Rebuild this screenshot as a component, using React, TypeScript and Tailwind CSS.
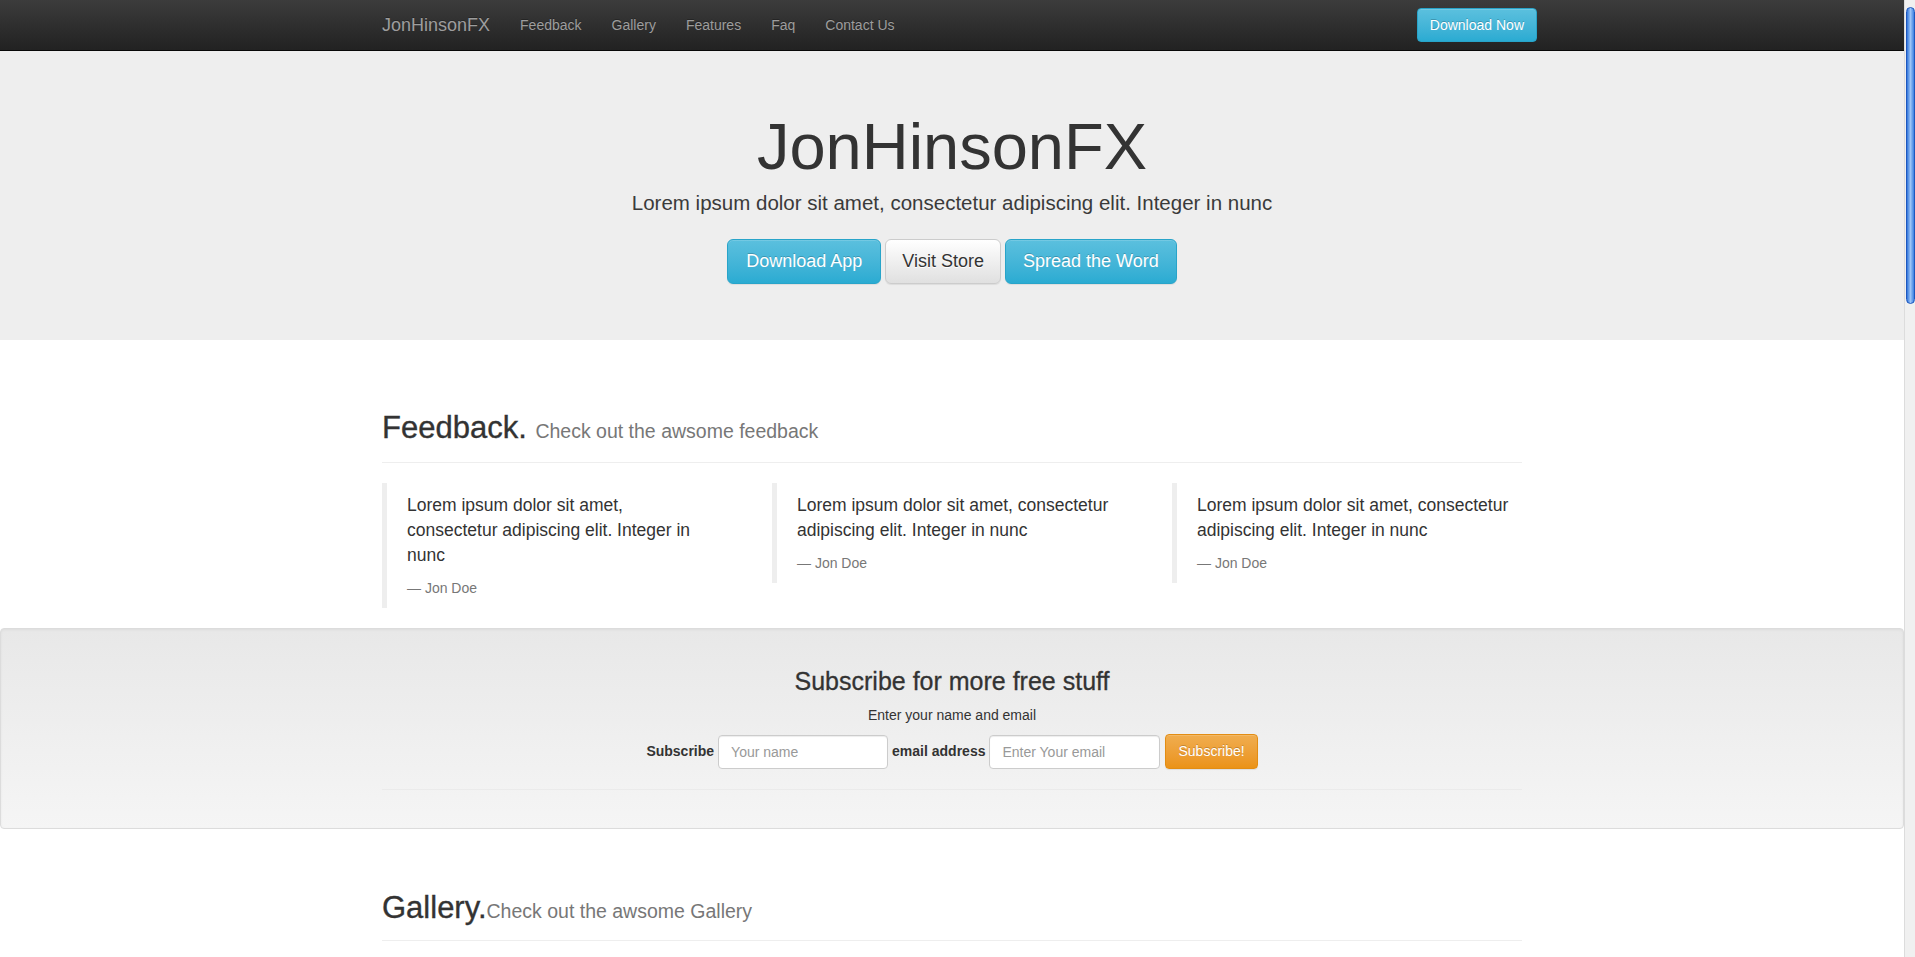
import React from 'react';

const quotes = [
  ['Lorem ipsum dolor sit amet,', 'consectetur adipiscing elit. Integer in', 'nunc'],
  ['Lorem ipsum dolor sit amet, consectetur', 'adipiscing elit. Integer in nunc'],
  ['Lorem ipsum dolor sit amet, consectetur', 'adipiscing elit. Integer in nunc'],
];

function NavBar() {
  return (
    <div className="h-[51px] border-b border-[#080808] bg-gradient-to-b from-[#3c3c3c] to-[#222222]">
      <div className="mx-auto flex h-[50px] w-[1170px] items-center">
        <a className="px-[15px] text-[18px] leading-[20px] text-[#9d9d9d] [text-shadow:0_-1px_0_rgba(0,0,0,0.25)]">JonHinsonFX</a>
        {['Feedback', 'Gallery', 'Features', 'Faq', 'Contact Us'].map((l) => (
          <a key={l} className="px-[15px] text-[14px] leading-[20px] text-[#9d9d9d] [text-shadow:0_-1px_0_rgba(0,0,0,0.25)]">
            {l}
          </a>
        ))}
        <div className="ml-auto">
          <button className="h-[34px] rounded-[4px] border border-[#28a4c9] bg-gradient-to-b from-[#5bc0de] to-[#2aabd2] px-[12px] text-[14px] leading-[20px] text-white shadow-[inset_0_1px_0_rgba(255,255,255,0.15)] [text-shadow:0_-1px_0_rgba(0,0,0,0.2)]">
            Download Now
          </button>
        </div>
      </div>
    </div>
  );
}

function Hero() {
  return (
    <div className="bg-[#eeeeee] pt-[60px] pb-[56px] text-center text-[#333]">
      <h1 className="text-[65px] leading-[71px]">JonHinsonFX</h1>
      <p className="mt-[6px] text-[20.5px] font-light leading-[30px] text-[#3a3a3a]">
        Lorem ipsum dolor sit amet, consectetur adipiscing elit. Integer in nunc
      </p>
      <div className="mt-[21px] flex justify-center gap-[4px]">
        <button className="h-[45px] rounded-[6px] border border-[#28a4c9] bg-gradient-to-b from-[#5bc0de] to-[#2aabd2] px-[18px] text-[18px] text-white shadow-[inset_0_1px_0_rgba(255,255,255,0.15),0_1px_1px_rgba(0,0,0,0.075)] [text-shadow:0_-1px_0_rgba(0,0,0,0.2)]">
          Download App
        </button>
        <button className="h-[45px] rounded-[6px] border border-[#cccccc] bg-gradient-to-b from-white to-[#e0e0e0] px-[16px] text-[18px] text-[#333] shadow-[inset_0_1px_0_rgba(255,255,255,0.15),0_1px_1px_rgba(0,0,0,0.075)] [text-shadow:0_1px_0_#fff]">
          Visit Store
        </button>
        <button className="h-[45px] rounded-[6px] border border-[#28a4c9] bg-gradient-to-b from-[#5bc0de] to-[#2aabd2] px-[17px] text-[18px] text-white shadow-[inset_0_1px_0_rgba(255,255,255,0.15),0_1px_1px_rgba(0,0,0,0.075)] [text-shadow:0_-1px_0_rgba(0,0,0,0.2)]">
          Spread the Word
        </button>
      </div>
    </div>
  );
}

function SectionHeader({ title, sub, gap, pad }: { title: string; sub: string; gap: boolean; pad: string }) {
  return (
    <div className={`border-b border-[#eeeeee] ${pad}`}>
      <h2 className="mb-[10px] text-[31px] font-medium leading-[33px] text-[#333] [-webkit-text-stroke:0.35px_#333]">
        {title}
        {gap ? ' ' : ''}
        <small className="text-[19.5px] font-normal text-[#777] [-webkit-text-stroke:0]">{sub}</small>
      </h2>
    </div>
  );
}

function Feedback() {
  return (
    <div className="mx-auto w-[1140px] pt-[71px]">
      <SectionHeader title="Feedback." sub="Check out the awsome feedback" gap pad="pb-[4px]" />
      <div className="mt-[20px] grid grid-cols-[390px_400px_1fr] items-start">
        {quotes.map((lines, i) => (
          <blockquote key={i} className="mb-[20px] border-l-[5px] border-[#eeeeee] px-[20px] py-[10px]">
            <p className="mb-[10px] text-[17.5px] leading-[25px] text-[#333]">
              {lines.map((ln, j) => (
                <span key={j} className="block whitespace-nowrap">{ln}</span>
              ))}
            </p>
            <footer className="text-[14px] leading-[20px] text-[#777]">{'\u2014\u00a0'}Jon Doe</footer>
          </blockquote>
        ))}
      </div>
    </div>
  );
}

function Subscribe() {
  return (
    <div className="h-[201px] rounded-[4px] border border-[#dcdcdc] bg-gradient-to-b from-[#e8e8e8] to-[#f5f5f5] shadow-[inset_0_1px_3px_rgba(0,0,0,0.05)]">
      <div className="mx-auto w-[1140px] border-b border-black/[0.03] pt-[39px] pb-[20px] text-center text-[#333]">
        <h3 className="text-[25px] font-medium leading-[26px] [-webkit-text-stroke:0.3px_#333]">Subscribe for more free stuff</h3>
        <p className="mt-[11px] text-[14px] leading-[20px]">Enter your name and email</p>
        <div className="mt-[9px] flex items-center justify-center text-[14px]">
          <label className="mr-[4px] font-bold">Subscribe</label>
          <input
            className="h-[34px] w-[170px] rounded-[4px] border border-[#cccccc] bg-white px-[12px] text-[14px] shadow-[inset_0_1px_1px_rgba(0,0,0,0.075)] outline-none placeholder:text-[#999]"
            placeholder="Your name"
          />
          <label className="mr-[4px] ml-[4px] font-bold">email address</label>
          <input
            className="h-[34px] w-[171px] rounded-[4px] border border-[#cccccc] bg-white px-[12px] text-[14px] shadow-[inset_0_1px_1px_rgba(0,0,0,0.075)] outline-none placeholder:text-[#999]"
            placeholder="Enter Your email"
          />
          <button className="ml-[5px] h-[35px] rounded-[4px] border border-[#e38d13] bg-gradient-to-b from-[#f0ad4e] to-[#eb9316] px-[12px] text-[14px] text-white shadow-[inset_0_1px_0_rgba(255,255,255,0.15),0_1px_1px_rgba(0,0,0,0.075)] [text-shadow:0_-1px_0_rgba(0,0,0,0.2)]">
            Subscribe!
          </button>
        </div>
      </div>
    </div>
  );
}

function Gallery() {
  return (
    <div className="mx-auto w-[1140px] pt-[62px]">
      <SectionHeader title="Gallery." sub="Check out the awsome Gallery" gap={false} pad="pb-[2px]" />
    </div>
  );
}

export default function App() {
  return (
    <div className="flex h-[957px] overflow-hidden bg-white font-['Liberation_Sans',Arial,sans-serif]">
      <div className="min-w-0 flex-1">
        <NavBar />
        <Hero />
        <Feedback />
        <Subscribe />
        <Gallery />
      </div>
      {/* fake scrollbar */}
      <div className="w-[11px] shrink-0 border-l border-[#dcdcdc] bg-[#f0f0f0] pt-[7px]">
        <div className="mx-auto h-[297px] w-[9px] rounded-full border border-[#1d57bf] bg-gradient-to-r from-[#2f74da] via-[#9cc4f7] to-[#3a7fe0]" />
      </div>
    </div>
  );
}
